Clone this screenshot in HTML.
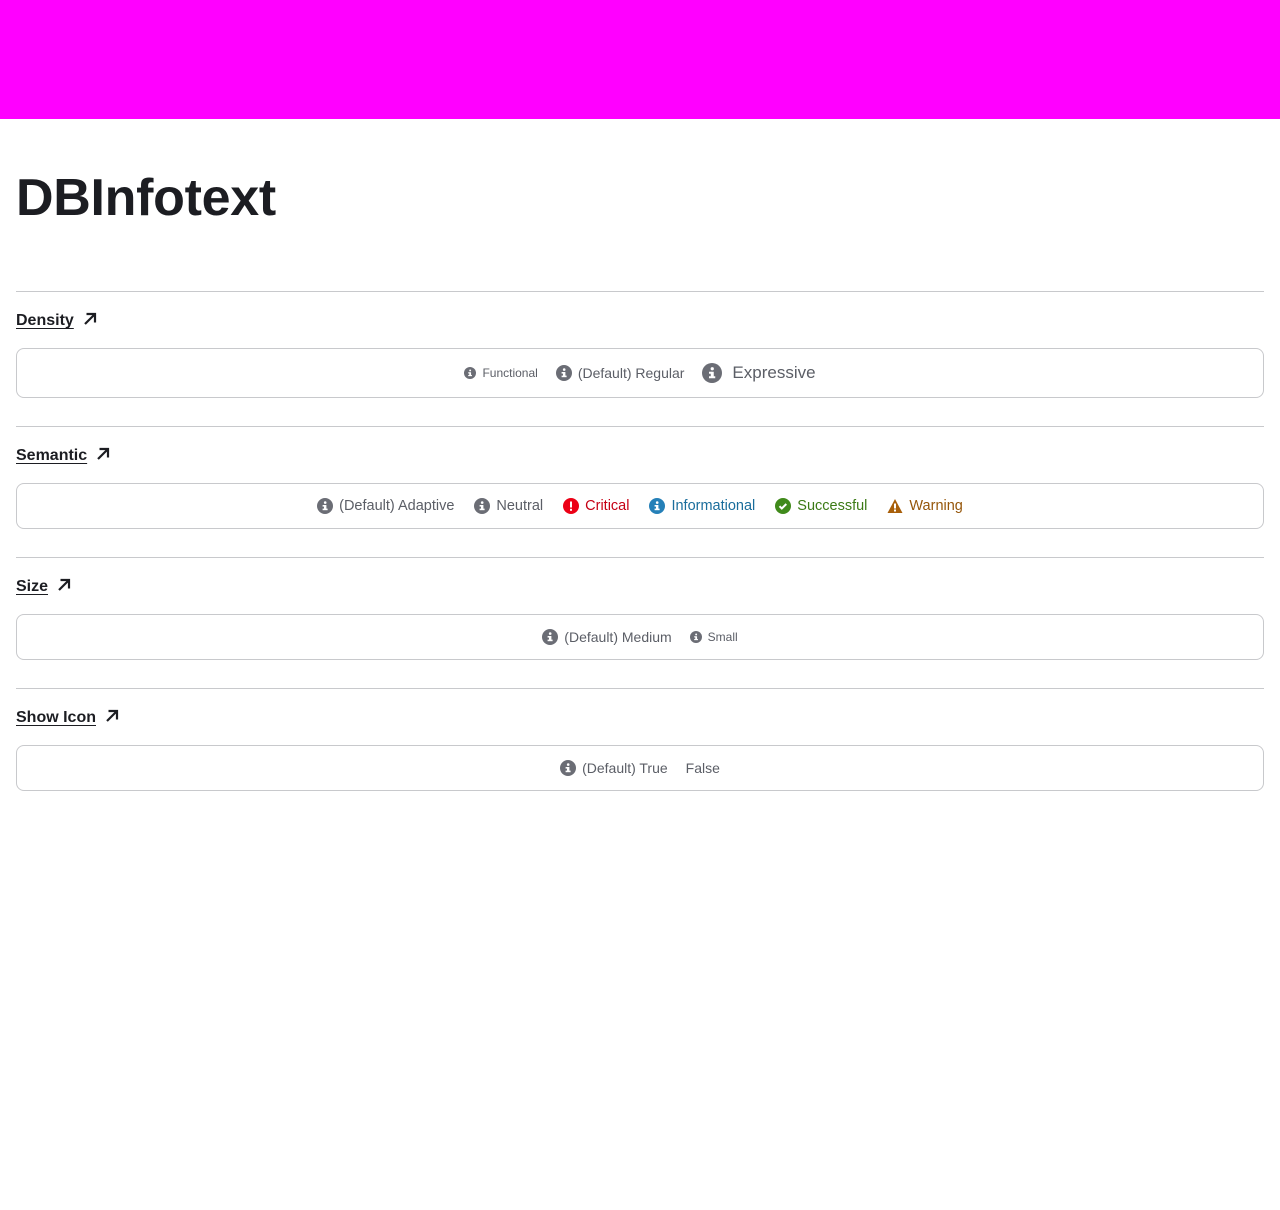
<!DOCTYPE html>
<html><head><meta charset="utf-8"><style>
body{margin:0;background:#fff;font-family:"Liberation Sans",sans-serif;color:#282d37;}
.top{height:119px;background:#ff00ff;}
h1{position:absolute;left:16px;top:166px;margin:0;font-size:52px;font-weight:bold;color:#1c1d22;letter-spacing:-0.3px;line-height:64px;}
.hr{position:absolute;left:16px;right:16px;height:1px;background:#c8c9cc;}
.h{position:absolute;left:16px;font-size:16px;font-weight:bold;color:#1c1d22;text-decoration:underline;text-underline-offset:3px;}
.h svg{vertical-align:-1px;margin-left:9px;}
.box{position:absolute;left:16px;right:16px;border:1px solid #c8c9cc;border-radius:8px;display:flex;align-items:center;justify-content:center;gap:18px;box-sizing:border-box;}
.it{display:flex;align-items:center;gap:6px;font-size:14px;color:#5b5e66;}
.it svg{flex:none;}
.sem{gap:20px}
.sem .it{font-size:14.5px}
</style></head><body>
<div class="top"></div>
<h1>DBInfotext</h1>

<svg width="0" height="0" style="position:absolute"><defs>
<g id="info"><circle cx="8" cy="8" r="8"/><rect x="7" y="7" width="2.4" height="5" fill="#fff"/><rect x="5.6" y="7" width="2" height="1.6" fill="#fff"/><rect x="5.6" y="10.6" width="5" height="1.6" fill="#fff"/><circle cx="8.2" cy="4.6" r="1.3" fill="#fff"/></g>
<path id="arr" d="M2 12L12 2M3.5 2h8.5v8.5" stroke="#1c1d22" stroke-width="2.2" fill="none"/>
</defs></svg>

<div class="hr" style="top:291px"></div>
<div class="h" style="top:312px">Density<svg width="14" height="14" viewBox="0 0 14 14"><use href="#arr"/></svg></div>
<div class="box" style="top:348px;height:50px">
<div class="it" style="font-size:12px;gap:6px"><svg width="12" height="12" viewBox="0 0 16 16" fill="#6b6d75"><use href="#info"/></svg>Functional</div>
<div class="it"><svg width="16" height="16" viewBox="0 0 16 16" fill="#6b6d75"><use href="#info"/></svg>(Default) Regular</div>
<div class="it" style="font-size:17px;gap:10px"><svg width="20" height="20" viewBox="0 0 16 16" fill="#6b6d75"><use href="#info"/></svg>Expressive</div>
</div>

<div class="hr" style="top:426px"></div>
<div class="h" style="top:447px">Semantic<svg width="14" height="14" viewBox="0 0 14 14"><use href="#arr"/></svg></div>
<div class="box sem" style="top:483px;height:46px">
<div class="it"><svg width="16" height="16" viewBox="0 0 16 16" fill="#6b6d75"><use href="#info"/></svg>(Default) Adaptive</div>
<div class="it"><svg width="16" height="16" viewBox="0 0 16 16" fill="#6b6d75"><use href="#info"/></svg>Neutral</div>
<div class="it" style="color:#c50014"><svg width="16" height="16" viewBox="0 0 16 16"><circle cx="8" cy="8" r="8" fill="#ec0016"/><rect x="7" y="3.5" width="2" height="6" fill="#fff"/><rect x="7" y="10.8" width="2" height="2" fill="#fff"/></svg>Critical</div>
<div class="it" style="color:#1a6d9c"><svg width="16" height="16" viewBox="0 0 16 16" fill="#2580b8"><use href="#info"/></svg>Informational</div>
<div class="it" style="color:#3b7a15"><svg width="16" height="16" viewBox="0 0 16 16"><circle cx="8" cy="8" r="8" fill="#408a1b"/><path d="M4.5 8.2l2.3 2.3 4.5-4.5" stroke="#fff" stroke-width="2" fill="none"/></svg>Successful</div>
<div class="it" style="color:#95560a"><svg width="16" height="16" viewBox="0 0 16 16"><path d="M8 1L15.5 15H0.5z" fill="#a85f0a"/><rect x="7" y="5.5" width="2" height="5" fill="#fff"/><rect x="7" y="11.5" width="2" height="2" fill="#fff"/></svg>Warning</div>
</div>

<div class="hr" style="top:557px"></div>
<div class="h" style="top:578px">Size<svg width="14" height="14" viewBox="0 0 14 14"><use href="#arr"/></svg></div>
<div class="box" style="top:614px;height:46px">
<div class="it"><svg width="16" height="16" viewBox="0 0 16 16" fill="#6b6d75"><use href="#info"/></svg>(Default) Medium</div>
<div class="it" style="font-size:12px;gap:6px"><svg width="12" height="12" viewBox="0 0 16 16" fill="#6b6d75"><use href="#info"/></svg>Small</div>
</div>

<div class="hr" style="top:688px"></div>
<div class="h" style="top:709px">Show Icon<svg width="14" height="14" viewBox="0 0 14 14"><use href="#arr"/></svg></div>
<div class="box" style="top:745px;height:46px">
<div class="it"><svg width="16" height="16" viewBox="0 0 16 16" fill="#6b6d75"><use href="#info"/></svg>(Default) True</div>
<div class="it">False</div>
</div>
</body></html>
